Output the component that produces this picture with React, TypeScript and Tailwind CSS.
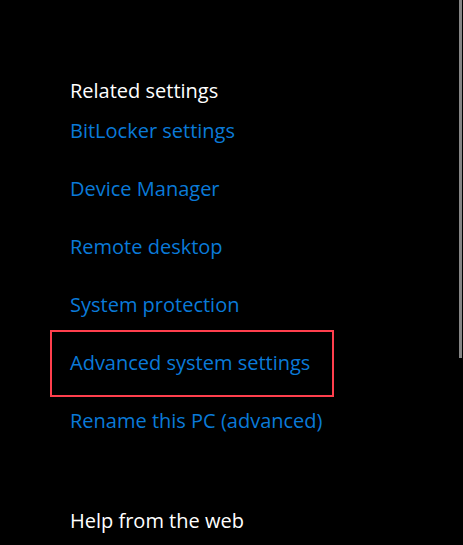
const links: { id: number; name: string; marked?: boolean }[] = [
  { id: 1, name: "BitLocker settings" },
  { id: 2, name: "Device Manager" },
  { id: 3, name: "Remote desktop" },
  { id: 4, name: "System protection" },
  { id: 5, name: "Advanced system settings", marked: true },
  { id: 6, name: "Rename this PC (advanced)" },
];

function App() {
  return (
    <div
      className="relative w-[463px] h-[545px] overflow-hidden bg-black text-[20px] text-white"
      style={{ fontFamily: '"Open Sans", "Noto Sans", sans-serif' }}
    >
      <div className="flex flex-col pl-[70px] pt-[80px]">
        <h2 className="h-[22px] leading-[22px]">Related settings</h2>
        {links.map((item) => (
          <div key={item.id} className="relative flex h-[58px] items-center">
            <a href="#" className="leading-[22px] text-[#0a7ad8]">
              {item.name}
            </a>
            {item.marked && (
              <span className="absolute left-[-20px] top-[-4px] h-[67px] w-[284px] border-2 border-[#ff3f4d]" />
            )}
          </div>
        ))}
        <h2 className="mt-[42px] flex h-[58px] items-center leading-[22px]">
          Help from the web
        </h2>
      </div>

      {/* scrollbar */}
      <div className="absolute right-[1px] top-0 h-[358px] w-[3px] bg-[#858585]" />
    </div>
  );
}

export default App;
